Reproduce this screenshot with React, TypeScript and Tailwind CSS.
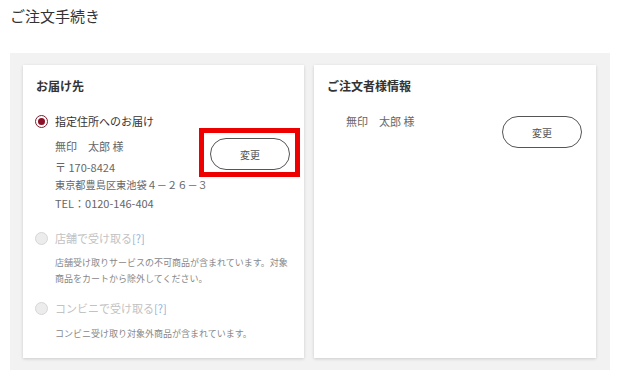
import React from "react";

const font = { fontFamily: '"Noto Sans CJK JP", "Noto Sans", sans-serif' };

function Radio({ checked, disabled }: { checked?: boolean; disabled?: boolean }) {
  if (checked) {
    return (
      <span className="flex h-[13px] w-[13px] shrink-0 items-center justify-center rounded-full border-[1.5px] border-[#7a1f2e] bg-white">
        <span className="h-[7px] w-[7px] rounded-full bg-[#8b0f25]" />
      </span>
    );
  }
  return (
    <span
      className={
        "h-[13px] w-[13px] shrink-0 rounded-full border border-[#d6d6d6] " +
        (disabled ? "bg-[#ececec]" : "bg-white")
      }
    />
  );
}

function ChangeButton() {
  return (
    <button className="flex h-[32px] w-[80px] shrink-0 items-center justify-center rounded-full border border-[#555] bg-white text-[10px] text-[#555]">
      変更
    </button>
  );
}

export default function App() {
  return (
    <div className="min-h-[376px] w-[617px] bg-white" style={font}>
      <h1 className="pl-[10px] pt-[5px] text-[15px] font-normal leading-[22px] text-[#333]">ご注文手続き</h1>
      <div className="ml-[10px] mt-[26px] w-[600px] bg-[#f2f2f2] pb-[12px] pl-[13px] pr-[14px] pt-[12px]">
        <div className="grid grid-cols-[281px_282px] gap-[10px]">
          {/* Left card */}
          <div className="bg-white pb-[16px] pl-[12px] pr-[14px] pt-[12px] shadow-[0_1px_3px_rgba(0,0,0,0.16)]">
            <h2 className="pl-px text-[12px] font-bold leading-[18px] text-[#333]">お届け先</h2>
            <div className="mt-[17px] flex items-center gap-[7px] text-[11px] leading-[18px] text-[#333]">
              <Radio checked />
              <span>指定住所へのお届け</span>
            </div>
            <div className="mt-[7px] flex items-start justify-between pl-[20px]">
              <div className="whitespace-nowrap text-[11px] leading-[18px] text-[#666]">
                <div className="mb-[3px]">無印　太郎 様</div>
                <div>〒 170-8424</div>
                <div className="text-[10.2px]">東京都豊島区東池袋４－２６－３</div>
                <div>TEL：0120-146-404</div>
              </div>
              <div className="relative mt-px shrink-0">
                <ChangeButton />
                <div className="pointer-events-none absolute -bottom-[7px] -left-[11px] -right-[10px] -top-[10px] border-[5px] border-[#ee0000]" />
              </div>
            </div>
            <div className="mt-[17px] flex items-center gap-[7px] text-[11px] leading-[18px] text-[#c2c2c2]">
              <Radio disabled />
              <span>
                店舗で受け取る<span className="text-[#8fb2d8]">[?]</span>
              </span>
            </div>
            <div className="mt-[8px] pl-[20px] text-[9px] leading-[16px] text-[#888]">
              <div>店舗受け取りサービスの不可商品が含まれています。対象</div>
              <div>商品をカートから除外してください。</div>
            </div>
            <div className="mt-[12px] flex items-center gap-[7px] text-[11px] leading-[18px] text-[#c2c2c2]">
              <Radio disabled />
              <span>
                コンビニで受け取る<span className="text-[#8fb2d8]">[?]</span>
              </span>
            </div>
            <div className="mt-[9px] pl-[20px] text-[9px] leading-[16px] text-[#888]">
              <div>コンビニ受け取り対象外商品が含まれています。</div>
            </div>
          </div>
          {/* Right card */}
          <div className="bg-white pl-[13px] pr-[14px] pt-[12px] shadow-[0_1px_3px_rgba(0,0,0,0.16)]">
            <h2 className="text-[12px] font-bold leading-[18px] text-[#333]">ご注文者様情報</h2>
            <div className="mt-[17px] flex items-start justify-between">
              <div className="pl-[19px] text-[11px] leading-[18px] text-[#666]">無印　太郎 様</div>
              <div className="mt-[4px]">
                <ChangeButton />
              </div>
            </div>
          </div>
        </div>
      </div>
    </div>
  );
}
